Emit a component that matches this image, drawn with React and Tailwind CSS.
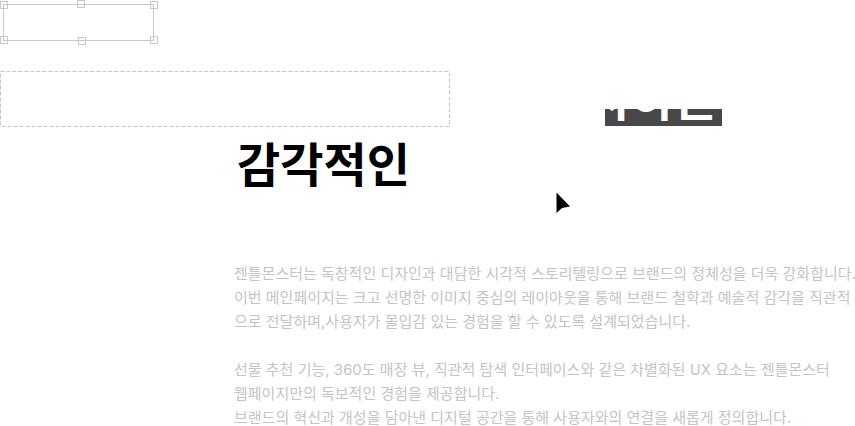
const HANDLE = "absolute size-2 border border-[#c8c8c8]";

export default function App() {
  return (
    <main className="min-h-screen overflow-hidden bg-white font-['Inter','Noto_Sans_CJK_KR',sans-serif]">
      <div className="relative mt-1 ml-[3px] h-[37px] w-[151px] border border-[#c8c8c8]">
        <span className={HANDLE + " -top-1 -left-1"} />
        <span className={HANDLE + " -top-[5px] left-[73px]"} />
        <span className={HANDLE + " -top-1 -right-[5px]"} />
        <span className={HANDLE + " -bottom-1 -left-1"} />
        <span className={HANDLE + " -bottom-[5px] left-[74px]"} />
        <span className={HANDLE + " -bottom-1 -right-[5px]"} />
      </div>
      <div className="mt-[30px] flex items-end justify-between pr-[133px]">
        <svg className="h-14 w-[450px]" fill="none" stroke="#c4c4c4">
          <rect x="0.5" y="0.5" width="449" height="55" strokeDasharray="4 2" />
        </svg>
        <div className="mb-px flex h-[17px] w-[117px] items-end justify-end overflow-hidden bg-[#484848] pr-1 text-[47px] leading-[54px] font-bold whitespace-nowrap text-white">
          <span>사하는</span>
        </div>
      </div>
      <div className="ml-[234px]">
        <div className="flex pt-2 pl-[3px]">
          <h1 className="text-[47px] leading-[60px] font-bold text-black">감각적인</h1>
          <svg className="mt-[57px] ml-[146px] h-[22px] w-[15px]" viewBox="0 0 15 22">
            <path d="M0.5 0.5 L14 14.5 L6 16 L0.5 21 Z" />
          </svg>
        </div>
        <div className="mt-12 text-[15px] leading-6 whitespace-nowrap text-[#c4c4c4]">
          <p>
            젠틀몬스터는 독창적인 디자인과 대담한 시각적 스토리텔링으로 브랜드의 정체성을 더욱 강화합니다.<br />
            이번 메인페이지는 크고 선명한 이미지 중심의 레이아웃을 통해 브랜드 철학과 예술적 감각을 직관적<br />
            으로 전달하며,사용자가 몰입감 있는 경험을 할 수 있도록 설계되었습니다.
          </p>
          <p className="mt-6">
            선물 추천 기능, 360도 매장 뷰, 직관적 탐색 인터페이스와 같은 차별화된 UX 요소는 젠틀몬스터<br />
            웹페이지만의 독보적인 경험을 제공합니다.<br />
            브랜드의 혁신과 개성을 담아낸 디지털 공간을 통해 사용자와의 연결을 새롭게 정의합니다.
          </p>
        </div>
      </div>
    </main>
  );
}
